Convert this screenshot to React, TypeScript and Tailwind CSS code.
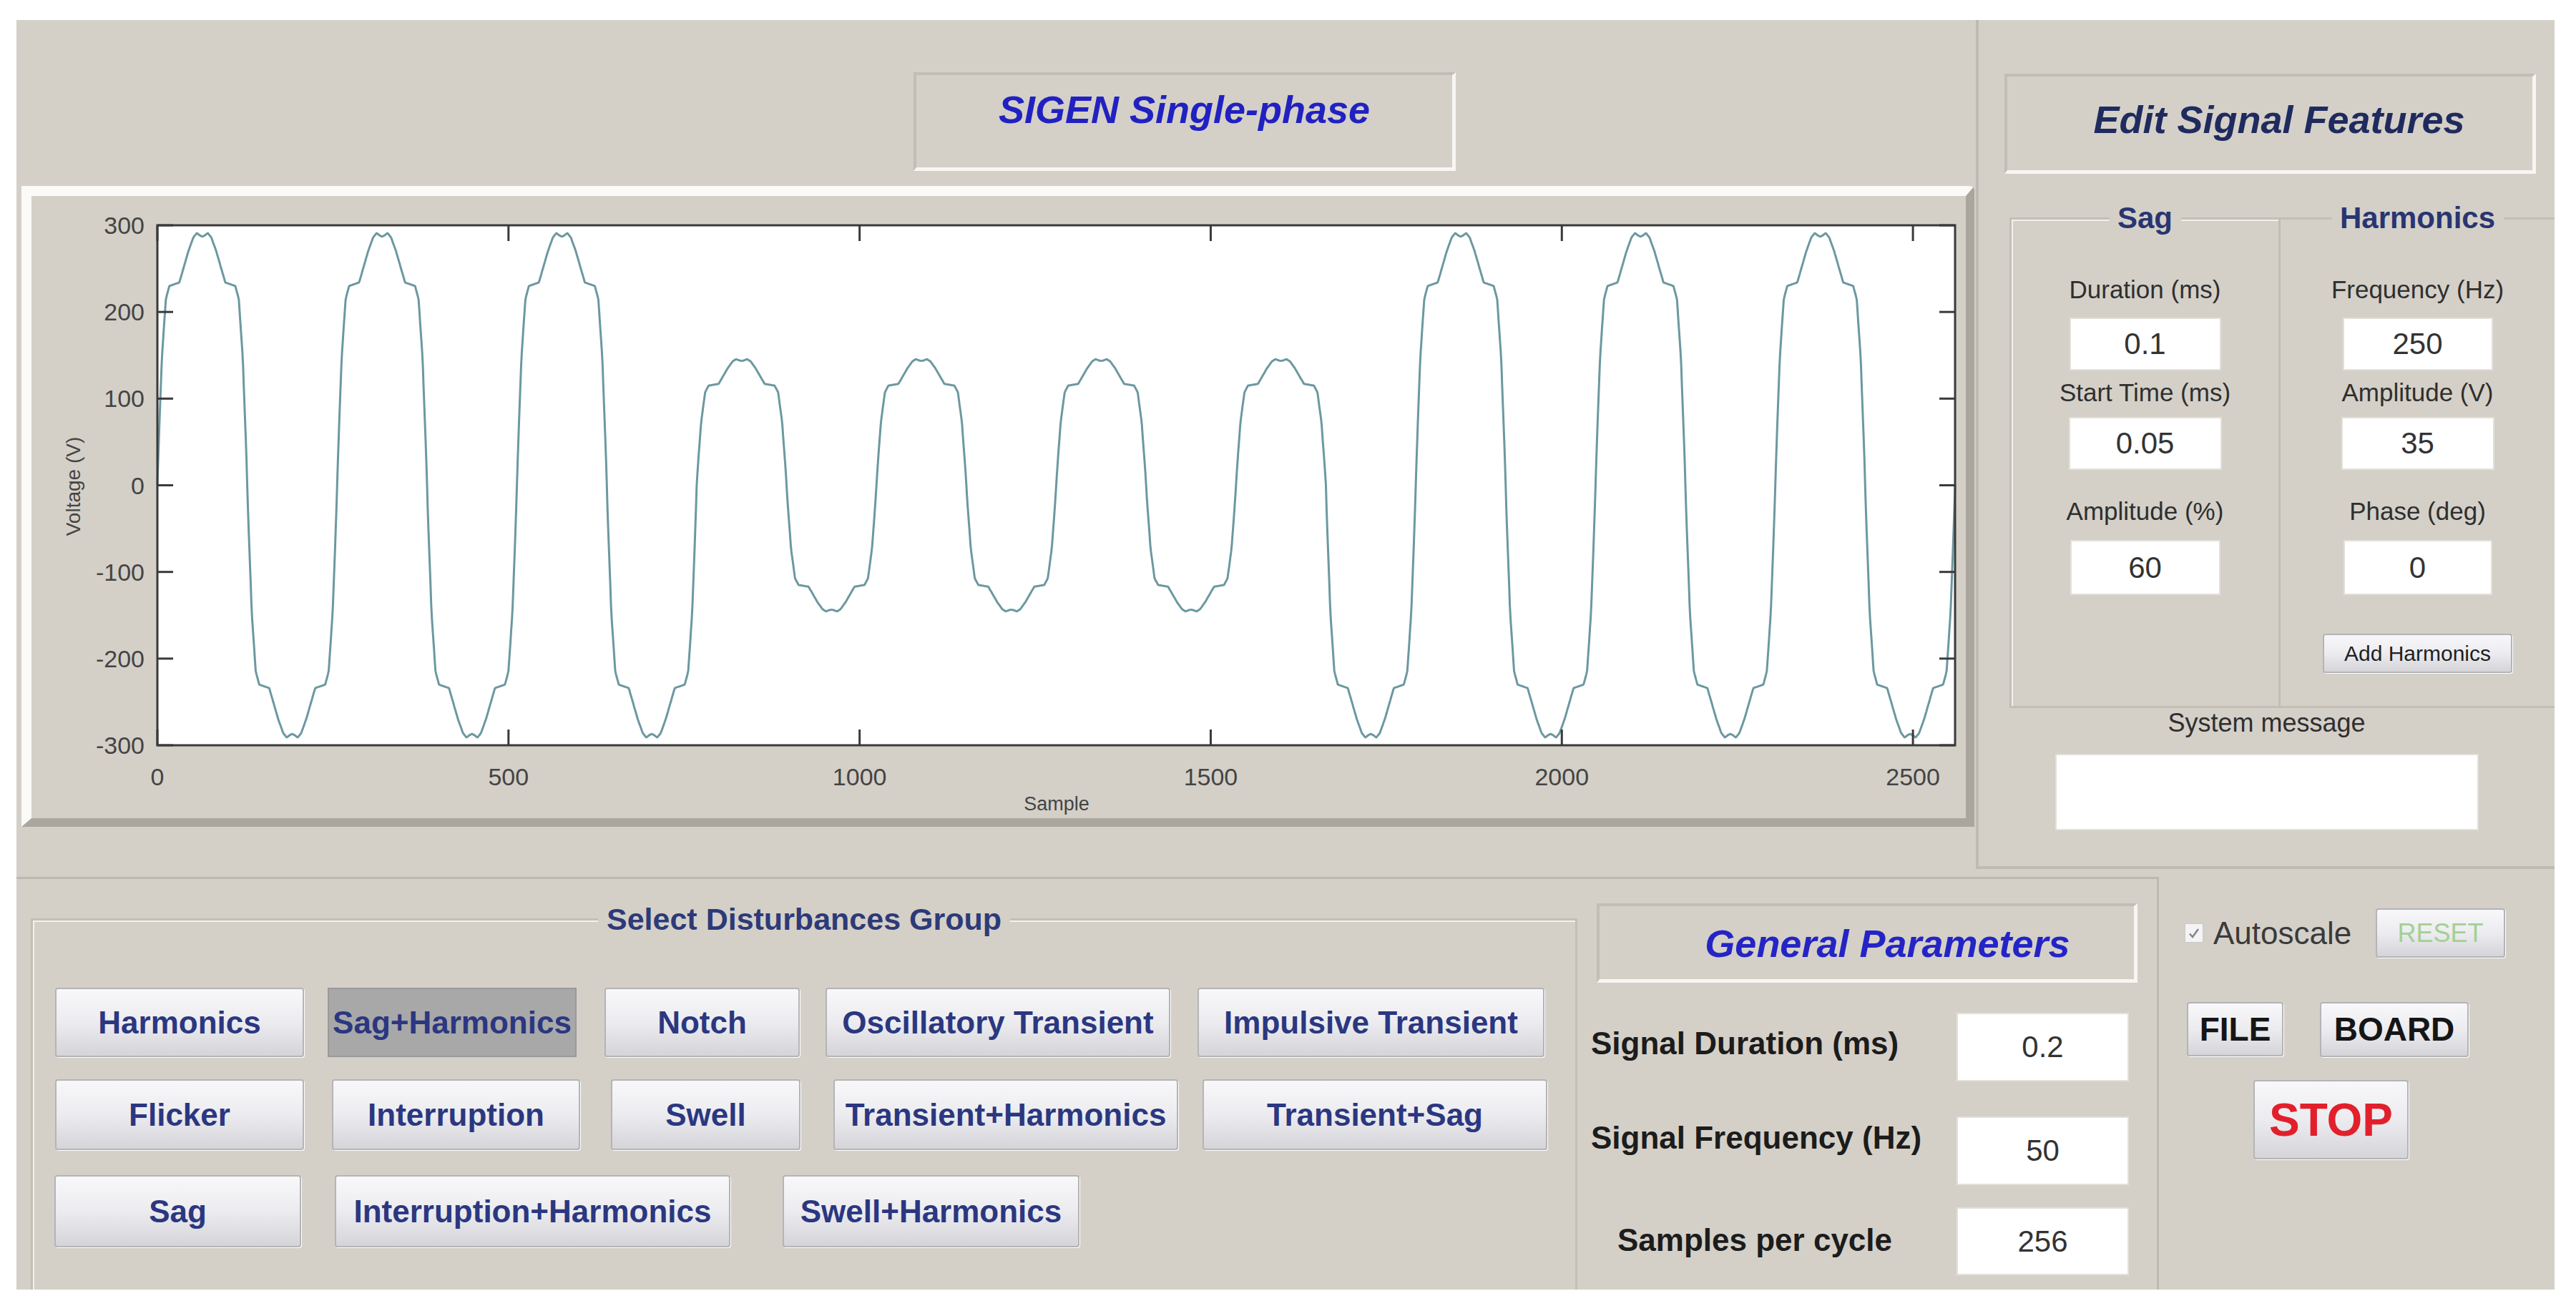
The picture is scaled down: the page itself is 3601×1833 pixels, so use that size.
import React from 'react';

// SIGEN single-phase signal generator panel

const SAMPLES = 2560;
const PERIOD = 256;

// one positive half-cycle, quarter wave (deg -> V), read off the plotted trace
const KNOTS: [number, number][] = [
  [0, 0],
  [2, 38],
  [9, 147],
  [17, 215],
  [24, 230],
  [44, 234],
  [52, 250],
  [62, 270],
  [72, 286],
  [79, 291],
  [86, 288],
  [90, 287],
];

function lobe(deg: number) {
  const d = deg > 90 ? 180 - deg : deg;
  for (let i = 1; i < KNOTS.length; i++) {
    const [xa, ya] = KNOTS[i - 1];
    const [xb, yb] = KNOTS[i];
    if (d <= xb) return ya + ((d - xa) / (xb - xa)) * (yb - ya);
  }
  return KNOTS[KNOTS.length - 1][1];
}

function voltage(s: number) {
  const deg = ((s % PERIOD) / PERIOD) * 360;
  const v = deg < 180 ? lobe(deg) : -lobe(deg - 180);
  // sag window
  const sag = s >= 768 && s < 1664 ? 0.5 : 1;
  return v * sag;
}

const FONT = "'Liberation Sans', Arial, sans-serif";

function SignalPlot() {
  const x0 = 176;
  const x1 = 2689;
  const y0 = 41;
  const y1 = 768;
  const sx = (s: number) => x0 + (s / SAMPLES) * (x1 - x0);
  const sy = (v: number) => y0 + ((300 - v) / 600) * (y1 - y0);

  let d = '';
  for (let s = 0; s <= SAMPLES; s++) {
    d += `${s ? 'L' : 'M'}${sx(s).toFixed(1)} ${sy(voltage(s)).toFixed(1)}`;
  }

  const xTicks = [0, 500, 1000, 1500, 2000, 2500];
  const yTicks = [300, 200, 100, 0, -100, -200, -300];

  return (
    <svg width={2704} height={870} className="block" fontFamily={FONT}>
      <rect x={x0} y={y0} width={x1 - x0} height={y1 - y0} fill="#ffffff" />
      <path d={d} fill="none" stroke="#6c98a0" strokeWidth={3} strokeLinejoin="round" />
      <rect x={x0} y={y0} width={x1 - x0} height={y1 - y0} fill="none" stroke="#3a3a3a" strokeWidth={3} />
      {xTicks.map((t) => (
        <g key={`x${t}`}>
          <line x1={sx(t)} x2={sx(t)} y1={y1} y2={y1 - 22} stroke="#3a3a3a" strokeWidth={3} />
          <line x1={sx(t)} x2={sx(t)} y1={y0} y2={y0 + 22} stroke="#3a3a3a" strokeWidth={3} />
          <text x={sx(t)} y={824} fontSize={34} fill="#444" textAnchor="middle">
            {t}
          </text>
        </g>
      ))}
      {yTicks.map((t) => (
        <g key={`y${t}`}>
          <line x1={x0} x2={x0 + 22} y1={sy(t)} y2={sy(t)} stroke="#3a3a3a" strokeWidth={3} />
          <line x1={x1} x2={x1 - 22} y1={sy(t)} y2={sy(t)} stroke="#3a3a3a" strokeWidth={3} />
          <text x={158} y={sy(t) + 12} fontSize={34} fill="#444" textAnchor="end">
            {t}
          </text>
        </g>
      ))}
      <text x={1433} y={859} fontSize={27} fill="#444" textAnchor="middle">
        Sample
      </text>
      <text transform="translate(68 406) rotate(-90)" fontSize={28} fill="#444" textAnchor="middle">
        Voltage (V)
      </text>
    </svg>
  );
}

const etched =
  'border-t-4 border-l-4 border-b-[5px] border-r-[5px] border-t-[#c2beb6] border-l-[#c2beb6] border-b-[#f7f6f3] border-r-[#f7f6f3]';

const winButton =
  'flex items-center justify-center rounded-[4px] border-2 border-[#b4b4b8] bg-linear-to-b from-[#f8f8fa] via-[#ececf0] to-[#d4d4d9] shadow-[1px_1px_0_#ffffff]';

function Field({ value, className }: { value?: string; className: string }) {
  return (
    <div
      className={`flex items-center justify-center bg-white border-2 border-[#e3e0d9] text-[42px] leading-none text-[#333] ${className}`}
    >
      {value}
    </div>
  );
}

const disturbanceRows = [
  {
    cls: 'mt-[94px] h-[97px]',
    items: [
      { label: 'Harmonics', cls: 'ml-[31px] w-[348px]' },
      { label: 'Sag+Harmonics', cls: 'ml-[33px] w-[348px]', pressed: true },
      { label: 'Notch', cls: 'ml-[39px] w-[273px]' },
      { label: 'Oscillatory Transient', cls: 'ml-[36px] w-[482px]' },
      { label: 'Impulsive Transient', cls: 'ml-[38px] w-[485px]' },
    ],
  },
  {
    cls: 'mt-[31px] h-[99px]',
    items: [
      { label: 'Flicker', cls: 'ml-[31px] w-[348px]' },
      { label: 'Interruption', cls: 'ml-[39px] w-[347px]' },
      { label: 'Swell', cls: 'ml-[43px] w-[265px]' },
      { label: 'Transient+Harmonics', cls: 'ml-[46px] w-[482px]' },
      { label: 'Transient+Sag', cls: 'ml-[34px] w-[482px]' },
    ],
  },
  {
    cls: 'mt-[35px] h-[101px]',
    items: [
      { label: 'Sag', cls: 'ml-[30px] w-[345px]' },
      { label: 'Interruption+Harmonics', cls: 'ml-[47px] w-[553px]' },
      { label: 'Swell+Harmonics', cls: 'ml-[73px] w-[415px]' },
    ],
  },
];

const generalRows = [
  { label: 'Signal Duration (ms)', value: '0.2', cls: 'mt-[42px] h-[96px]', labelCls: 'pl-[6px] mb-[10px]' },
  { label: 'Signal Frequency (Hz)', value: '50', cls: 'mt-[49px] h-[96px]', labelCls: 'pl-[6px] mb-[36px]' },
  { label: 'Samples per cycle', value: '256', cls: 'mt-[31px] h-[95px]', labelCls: 'pl-[43px] mb-[4px]' },
];

export default function App() {
  return (
    <div className="w-[3601px] h-[1833px] bg-white pt-[28px] pl-[23px] font-['Liberation_Sans',Arial,sans-serif]">
      <div className="w-[3548px] h-[1775px] bg-[#d4d0c8] flex flex-col overflow-hidden">
        {/* upper half: plot + signal features */}
        <div className="flex h-[1187px]">
          <div className="w-[2739px] flex flex-col">
            <div className={`mt-[73px] ml-[1254px] w-[758px] h-[138px] pt-[18px] flex justify-center ${etched}`}>
              <span className="text-[54px] leading-[60px] font-bold italic text-[#2121c2]">SIGEN Single-phase</span>
            </div>
            <div className="mt-[21px] ml-[7px] w-[2730px] h-[896px] border-t-[14px] border-l-[14px] border-b-[12px] border-r-[12px] border-t-[#fbfaf7] border-l-[#fbfaf7] border-b-[#aaa69e] border-r-[#aaa69e] rounded-tr-[6px]">
              <SignalPlot />
            </div>
          </div>

          <div className="w-[809px] flex flex-col border-l-4 border-b-4 border-[#bfbbb3]">
            <div className={`mt-[75px] ml-[36px] w-[743px] h-[140px] pt-[30px] pl-[26px] flex justify-center ${etched}`}>
              <span className="text-[54px] leading-[60px] font-bold italic text-[#1f2b5e]">Edit Signal Features</span>
            </div>

            <div className="mt-[61px] ml-[43px] flex h-[686px]">
              {/* Sag group */}
              <div className="relative w-[379px] h-full border-[3px] border-[#c3bfb7] shadow-[inset_2px_2px_0_#f3f1ec] flex flex-col items-center text-[35px] leading-[40px] text-[#2f2f2f]">
                <span className="absolute left-1/2 -translate-x-1/2 -top-[26px] bg-[#d4d0c8] px-3 text-[42px] leading-[48px] font-bold text-[#293571]">
                  Sag
                </span>
                <span className="mt-[78px]">Duration (ms)</span>
                <Field value="0.1" className="mt-[19px] w-[212px] h-[74px]" />
                <span className="mt-[11px]">Start Time (ms)</span>
                <Field value="0.05" className="mt-[14px] w-[214px] h-[74px]" />
                <span className="mt-[38px]">Amplitude (%)</span>
                <Field value="60" className="mt-[20px] w-[210px] h-[77px]" />
              </div>
              {/* Harmonics group */}
              <div className="relative w-[383px] h-full border-y-[3px] border-[#c3bfb7] flex flex-col items-center text-[35px] leading-[40px] text-[#2f2f2f]">
                <span className="absolute left-1/2 -translate-x-1/2 -top-[26px] bg-[#d4d0c8] px-3 text-[42px] leading-[48px] font-bold text-[#293571]">
                  Harmonics
                </span>
                <span className="mt-[78px]">Frequency (Hz)</span>
                <Field value="250" className="mt-[19px] w-[210px] h-[74px]" />
                <span className="mt-[11px]">Amplitude (V)</span>
                <Field value="35" className="mt-[14px] w-[214px] h-[74px]" />
                <span className="mt-[38px]">Phase (deg)</span>
                <Field value="0" className="mt-[20px] w-[208px] h-[77px]" />
                <div className={`mt-[54px] w-[265px] h-[55px] text-[30px] text-[#1f1f1f] ${winButton}`}>Add Harmonics</div>
              </div>
            </div>

            <span className="mt-[1px] text-center text-[36px] leading-[40px] text-[#2f2f2f]">System message</span>
            <div className="mt-[23px] mx-auto w-[592px] h-[107px] bg-white border-2 border-[#e3e0d9]" />
          </div>
        </div>

        {/* lower half: disturbances, general parameters, controls */}
        <div className="flex h-[588px]">
          <div className="w-[2995px] mt-[11px] flex border-t-[3px] border-r-[3px] border-[#bdb9b1]">
            <div className="relative ml-[20px] mt-[55px] w-[2162px] h-[519px] border-[3px] border-b-0 border-[#c3bfb7] shadow-[inset_2px_2px_0_#f3f1ec] flex flex-col">
              <span className="absolute left-1/2 -translate-x-1/2 -top-[26px] bg-[#d4d0c8] px-3 text-[43px] leading-[48px] font-bold text-[#2d3a78]">
                Select Disturbances Group
              </span>
              {disturbanceRows.map((row, r) => (
                <div key={r} className={`flex ${row.cls}`}>
                  {row.items.map((b) =>
                    b.pressed ? (
                      <div
                        key={b.label}
                        className={`flex items-center justify-center border-2 border-[#9a9a9a] bg-[#a8a8a8] text-[44px] font-bold text-[#2b3780] ${b.cls}`}
                      >
                        {b.label}
                      </div>
                    ) : (
                      <div key={b.label} className={`text-[44px] font-bold text-[#2b3780] ${winButton} ${b.cls}`}>
                        {b.label}
                      </div>
                    ),
                  )}
                </div>
              ))}
            </div>

            <div className="ml-[13px] w-[770px] flex flex-col">
              <div className={`mt-[34px] ml-[14px] w-[756px] h-[111px] pt-[22px] pl-[58px] flex justify-center ${etched}`}>
                <span className="text-[54px] leading-[60px] font-bold italic text-[#2424c6]">General Parameters</span>
              </div>
              {generalRows.map((row) => (
                <div key={row.label} className={`flex items-center ${row.cls}`}>
                  <span className={`w-[470px] text-[44px] font-bold text-[#1c1c1c] ${row.labelCls}`}>{row.label}</span>
                  <Field value={row.value} className="ml-[47px] w-[241px] h-full" />
                </div>
              ))}
            </div>
          </div>

          <div className="w-[553px] flex flex-col">
            <div className="mt-[55px] ml-[36px] flex items-center h-[69px]">
              <div className="w-[26px] h-[27px] bg-[#f4f4f4] border border-[#c9c9c9] flex items-center justify-center">
                <svg width="18" height="18" viewBox="0 0 18 18">
                  <path d="M3 9.5 L7 14 L15 3" fill="none" stroke="#7d8594" strokeWidth="2.5" />
                </svg>
              </div>
              <span className="ml-[14px] w-[227px] text-[44px] text-[#3a3a3a]">Autoscale</span>
              <div className={`w-[181px] h-[69px] text-[36px] text-[#a3d094] ${winButton}`}>RESET</div>
            </div>
            <div className="mt-[62px] ml-[39px] flex gap-[51px]">
              <div className={`w-[135px] h-[76px] text-[46px] font-bold text-[#151515] ${winButton}`}>FILE</div>
              <div className={`w-[208px] h-[77px] text-[46px] font-bold text-[#151515] ${winButton}`}>BOARD</div>
            </div>
            <div className={`mt-[32px] ml-[132px] w-[217px] h-[111px] text-[64px] font-bold text-[#e1202c] ${winButton}`}>
              STOP
            </div>
          </div>
        </div>
      </div>
    </div>
  );
}
